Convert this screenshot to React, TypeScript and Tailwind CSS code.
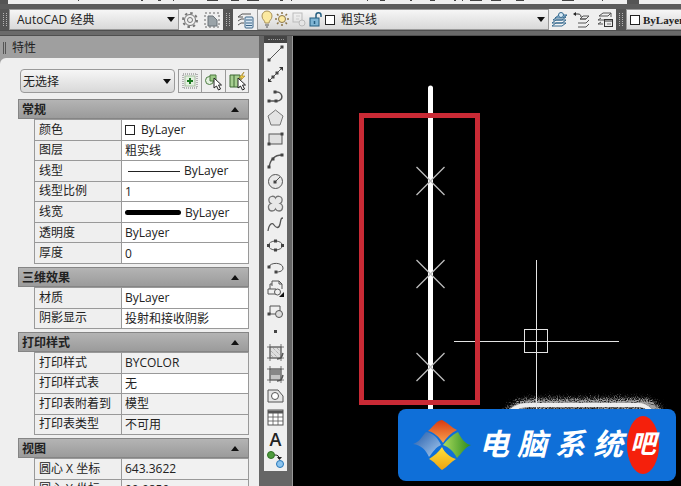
import { Fragment, ReactNode } from "react";
import clsx from "clsx";

const FONT =
  "font-['Open_Sans','Noto_Sans_CJK_SC',sans-serif] text-xs leading-4 text-[#222]";

interface PropertyRow {
  label: string;
  value: string;
  swatch?: "color" | "thin" | "thick";
  locked?: boolean;
}

interface PropertySection {
  title: string;
  height: string;
  rows: PropertyRow[];
}

const SECTIONS: PropertySection[] = [
  {
    title: "常规",
    height: "h-[145px]",
    rows: [
      { label: "颜色", value: "ByLayer", swatch: "color" },
      { label: "图层", value: "粗实线" },
      { label: "线型", value: "ByLayer", swatch: "thin" },
      { label: "线型比例", value: "1" },
      { label: "线宽", value: "ByLayer", swatch: "thick" },
      { label: "透明度", value: "ByLayer" },
      { label: "厚度", value: "0" },
    ],
  },
  {
    title: "三维效果",
    height: "h-[42px]",
    rows: [
      { label: "材质", value: "ByLayer" },
      { label: "阴影显示", value: "投射和接收阴影" },
    ],
  },
  {
    title: "打印样式",
    height: "h-[83px]",
    rows: [
      { label: "打印样式", value: "BYCOLOR", locked: true },
      { label: "打印样式表", value: "无" },
      { label: "打印表附着到", value: "模型", locked: true },
      { label: "打印表类型", value: "不可用", locked: true },
    ],
  },
  {
    title: "视图",
    height: "h-[42px]",
    rows: [
      { label: "圆心 X 坐标", value: "643.3622", locked: true },
      { label: "圆心 Y 坐标", value: "90.9859", locked: true },
    ],
  },
];

const Node = ({ x, y }: { x: number; y: number }) => (
  <rect x={x - 1.5} y={y - 1.5} width="3" height="3" fill="#444" stroke="none" />
);

const DRAW_TOOLS: { name: string; icon: ReactNode }[] = [
  {
    name: "直线",
    icon: (
      <>
        <path d="M3 16 16 3" />
        <Node x={3} y={16} />
        <Node x={16} y={3} />
      </>
    ),
  },
  {
    name: "构造线",
    icon: (
      <>
        <path d="M3 16 16 3" />
        <path d="M2 17v-4l4 4zM17 2v4l-4-4z" fill="#333" stroke="none" />
        <Node x={7} y={12} />
        <Node x={11} y={8} />
      </>
    ),
  },
  {
    name: "多段线",
    icon: (
      <>
        <path d="M3 14h8c7 0 6-9 0-9H9" strokeWidth="1.5" />
        <Node x={3} y={14} />
        <Node x={10} y={14} />
        <Node x={9} y={5} />
      </>
    ),
  },
  {
    name: "多边形",
    icon: <path d="m9.500 2 7.500 6-3 9H5L2 8z" fill="#e3e3e3" stroke="#777" />,
  },
  {
    name: "矩形",
    icon: (
      <>
        <rect x="3" y="5" width="13" height="10" fill="#e0e0e0" />
        <Node x={3} y={15} />
        <Node x={16} y={5} />
      </>
    ),
  },
  {
    name: "圆弧",
    icon: (
      <>
        <path d="M3 17C4 9 8 4 16 4" strokeWidth="1.300" />
        <Node x={3} y={16} />
        <Node x={7} y={8} />
        <Node x={16} y={4} />
      </>
    ),
  },
  {
    name: "圆",
    icon: (
      <>
        <circle cx="9.500" cy="9.500" r="7" fill="#e8e8e8" />
        <path d="m9 10 5-5" />
        <Node x={9} y={10} />
      </>
    ),
  },
  {
    name: "修订云线",
    icon: (
      <path
        d="M9.500 4C8 1 2 2 3 7c0 1 1 2 2 2.500C1 11 2 17 6 17c2 0 3-1 3.500-2 .5 1 2 2 3.500 2 4 0 5-6 1-7.500 1-.5 2-1.500 2-2.500 1-5-5-6-6.500-3z"
        fill="#e8e8e8"
        stroke="#777"
        strokeWidth="1.300"
      />
    ),
  },
  {
    name: "样条曲线",
    icon: <path d="M2 16C3 9 6 7 8 10s5 4 6-1 1-6 3-6" strokeWidth="1.300" />,
  },
  {
    name: "椭圆",
    icon: (
      <>
        <ellipse cx="9.500" cy="9.500" rx="7" ry="4.500" />
        <Node x={2.5} y={9.5} />
        <Node x={16.5} y={9.5} />
        <Node x={9.5} y={5} />
        <Node x={9.5} y={14} />
      </>
    ),
  },
  {
    name: "椭圆弧",
    icon: (
      <>
        <path d="M3 9c1-5 14-5 14 1 0 3-3 4-7 4" />
        <Node x={3} y={9} />
        <Node x={10} y={14} />
      </>
    ),
  },
  {
    name: "插入块",
    icon: (
      <>
        <path d="M6 7V2h7l3 3v5M6 5H4v5M2 10h8v5H2zM13 2v3h3" />
        <circle cx="11.500" cy="13" r="3" fill="#eee" />
        <path d="M18 13v5h-5z" fill="#111" stroke="none" />
      </>
    ),
  },
  {
    name: "创建块",
    icon: (
      <>
        <path d="M4 5h10v5M4 5v8h5" />
        <circle cx="13" cy="13" r="3.500" fill="#ddd" />
        <Node x={3} y={13} />
      </>
    ),
  },
  {
    name: "点",
    icon: <Node x={9.5} y={9.5} />,
  },
  {
    name: "图案填充",
    icon: (
      <>
        <rect x="4" y="4" width="11" height="11" fill="#ddd" stroke="#777" />
        <path d="M4 1v17M15 1v17M1 4h17M1 15h17" strokeWidth=".8" />
        <path
          d="m5 8 6 6M7 5l7 7M5 12l2 2M11 5l3 3"
          stroke="#999"
          strokeDasharray="1 1"
        />
        <path d="M11 16c4 0 5-2 6-6" strokeWidth="1.500" />
      </>
    ),
  },
  {
    name: "渐变色",
    icon: (
      <>
        <rect x="4" y="4" width="11" height="11" fill="#c5c5c5" stroke="#777" />
        <rect x="5" y="5" width="9" height="5" fill="#888" stroke="none" />
        <path d="M4 1v17M15 1v17M1 4h17M1 15h17" strokeWidth=".8" />
        <path d="M11 16c4 0 5-2 6-6" strokeWidth="1.500" />
      </>
    ),
  },
  {
    name: "面域",
    icon: (
      <>
        <path d="M2 4h10l5 6v6H2z" fill="#e5e5e5" />
        <circle cx="9" cy="10" r="3.500" fill="#fff" />
      </>
    ),
  },
  {
    name: "表格",
    icon: (
      <>
        <rect x="2" y="2" width="15" height="15" fill="#fff" />
        <path d="M2 4h15" strokeWidth="3" />
        <path d="M2 9h15M2 13h15M7 5v12M12 5v12" strokeWidth=".8" />
      </>
    ),
  },
  { name: "多行文字", icon: null },
  {
    name: "添加选定对象",
    icon: (
      <>
        <circle cx="5" cy="5" r="3.500" fill="#4d9b3d" stroke="#2d6e22" />
        <circle cx="14" cy="14" r="3.500" fill="#8cc4ee" stroke="#2877b8" />
        <path d="M9 5c3 0 4 1 4 4" stroke="#222" />
        <path d="M11 7h5l-2.500 3z" fill="#222" stroke="none" />
      </>
    ),
  },
];

// dark stubs of the toolbar above, as [left, width]
const STUBS = [
  [78, 1],
  [141, 2],
  [158, 3],
  [173, 1],
  [207, 11],
  [231, 8],
  [247, 12],
  [280, 3],
  [291, 1],
  [367, 1],
  [380, 5],
  [410, 2],
  [430, 5],
  [454, 2],
  [462, 1],
  [470, 12],
  [491, 10],
  [516, 8],
  [562, 12],
  [602, 1],
];

const Grip = ({ wide }: { wide?: boolean }) => (
  <div
    className={clsx(
      "flex shrink-0 items-stretch justify-center gap-[2px] bg-[#555] py-1",
      wide ? "w-[10px]" : "w-[9px]",
    )}
  >
    <i className="w-px border-l border-dotted border-[#b5b5b5]" />
    <i className="w-px border-l border-dotted border-[#b5b5b5]" />
  </div>
);

const Arrow = ({ up }: { up?: boolean }) => (
  <svg
    viewBox="0 0 8 5"
    className={clsx("h-[5px] w-2 shrink-0", up ? "" : "pointer-events-none")}
  >
    <path d={up ? "M4 0 8 5H0z" : "M0 0h8L4 5z"} fill="#111" />
  </svg>
);

const IconButton = ({
  label,
  className,
  children,
}: {
  label: string;
  className?: string;
  children: ReactNode;
}) => (
  <button
    type="button"
    aria-label={label}
    className={clsx("flex items-center justify-center", className)}
  >
    <svg
      viewBox="0 0 20 20"
      className="size-5 shrink-0"
      fill="none"
      stroke="#555"
      strokeWidth="1"
    >
      {children}
    </svg>
  </button>
);

const Combo = ({
  label,
  value,
  className,
  children,
}: {
  label: string;
  value: string;
  className?: string;
  children?: ReactNode;
}) => (
  <div
    className={clsx(
      "flex min-w-0 items-center border border-[#9a9a9a] bg-linear-to-b from-[#f6f6f6] to-[#d9d9d9] pr-[3px]",
      className,
    )}
  >
    {children}
    <select
      aria-label={label}
      className="min-w-0 flex-1 appearance-none bg-transparent outline-none"
    >
      <option>{value}</option>
    </select>
    <Arrow />
  </div>
);

const UpperToolbar = () => (
  <div className="flex h-1 shrink-0 bg-[#555]">
    <svg className="ml-2 h-1 w-[619px] bg-[#efefef]" viewBox="8 0 619 4">
      {STUBS.map(([x, width]) => (
        <rect key={x} x={x} y="0" width={width} height="1" fill="#444" />
      ))}
    </svg>
    <div className="ml-3 flex-1 bg-[#efefef]" />
  </div>
);

const LayerStack = ({ color }: { color: string }) => (
  <g stroke={color}>
    <path d="m2 16 4-3h10l-4 3zM2 13l4-3h10l-4 3zM3 10l4-3h9l-4 3z" fill="#f4f4f4" />
  </g>
);

const WorkspaceToolbar = () => (
  <div className="flex h-[21px] shrink-0 bg-[#efefef]">
    <Grip />
    <Combo label="工作空间" value="AutoCAD 经典" className="w-[170px] shrink-0 pl-[7px]" />
    <IconButton label="工作空间设置" className="w-[22px]">
      <circle cx="10" cy="10" r="5.500" stroke="#777" />
      <circle
        cx="10"
        cy="10"
        r="7"
        stroke="#777"
        strokeWidth="2"
        strokeDasharray="2.500 3"
      />
      <circle cx="10" cy="10" r="2.500" stroke="#777" />
    </IconButton>
    <IconButton label="我的工作空间" className="w-[22px]">
      <rect x="3" y="3" width="14" height="14" stroke="#666" strokeDasharray="2 2" />
      <path d="M6 6h5l4 4v6H6z" fill="#9aa3a8" stroke="#6b7378" />
    </IconButton>
    <Grip wide />
    <IconButton label="图层特性管理器" className="w-6">
      <path d="m3 7 4-3h9M3 11l3-2h3M3 15l3-2h3M3 7h5" stroke="#555" />
      <rect x="10" y="7" width="8" height="11" rx="1" fill="#d7e6f2" stroke="#3b6486" />
      <path d="M11 10h6M11 13h6M11 15.500h6" stroke="#3b6486" />
    </IconButton>
    <Combo label="图层" value="粗实线" className="w-[292px] shrink-0 pl-px">
      <svg viewBox="0 0 80 20" className="mr-[2px] h-5 w-20 shrink-0" fill="none">
        <path
          d="M6 13c0-3-3-3-3-7a5 5 0 0 1 10 0c0 4-3 4-3 7z"
          fill="#fbe9a0"
          stroke="#a9925a"
        />
        <path d="M6 15h4M7 17h2" stroke="#555" />
        <circle cx="23" cy="9" r="3.500" fill="#fbe9a0" stroke="#8c7548" />
        <path
          d="M23 2v2M23 14v2M16 9h2M28 9h2M18 4l1.500 1.500M28 4l-1.500 1.500M18 14l1.500-1.500M28 14l-1.500-1.500"
          stroke="#8c7548"
          strokeWidth="1.500"
        />
        <rect x="34" y="3" width="9" height="9" stroke="#bbb" />
        <path d="M37 6h4M37 9h3" stroke="#ccc" />
        <circle cx="43" cy="13" r="3" fill="#e5e5e5" stroke="#bbb" />
        <rect x="51" y="8" width="9" height="8" fill="#7fb5d4" stroke="#245e80" />
        <path d="M57 8V5c0-3 5-3 5 0v2M55.500 11v3" stroke="#245e80" strokeWidth="1.500" />
        <rect x="66.500" y="5.500" width="9" height="9" fill="#fff" stroke="#222" />
      </svg>
    </Combo>
    <IconButton label="将对象的图层置为当前" className="w-[22px]">
      <LayerStack color="#34688e" />
      <path d="m5 8 4-3h8l-4 3z" fill="#a9cde5" stroke="#34688e" />
      <circle cx="11" cy="5" r="2.500" fill="#d8ecf8" stroke="#34688e" />
    </IconButton>
    <IconButton label="上一个图层" className="w-[22px]">
      <path d="m8 9 3-3h6l-3 3zM6 13h8l3-3M6 17h8l3-3M8 9h6" />
      <path d="M3 4h3c2 0 3 1 3 3" stroke="#333" />
      <path d="M1 4l3-2v4z" fill="#222" stroke="none" />
    </IconButton>
    <IconButton label="图层状态管理器" className="w-[23px]">
      <path d="m4 6 4-3h8l-3 3zM3 10l3-2M3 10h6M3 14l3-2M3 14h5M16 3v4" />
      <rect x="9.500" y="9.500" width="8" height="7" fill="#eee" stroke="#333" />
      <path d="M10 11h7" stroke="#333" />
      <path d="M12 14h4" stroke="#777" />
    </IconButton>
    <Grip wide />
    <div className="flex min-w-0 flex-1 items-center overflow-hidden border border-r-0 border-[#9a9a9a] bg-linear-to-b from-[#f6f6f6] to-[#d9d9d9] pl-[3px]">
      <i className="mr-[3px] size-[10px] shrink-0 border border-[#222] bg-white" />
      <select
        aria-label="颜色控制"
        className="shrink-0 appearance-none bg-transparent font-['Liberation_Serif',serif] text-[11px] font-bold outline-none"
      >
        <option>ByLayer</option>
      </select>
    </div>
  </div>
);

const PropertyValue = ({ value, swatch }: PropertyRow) => (
  <div className="flex items-center pt-px">
    {swatch === "color" && (
      <i className="mr-[6px] size-[10px] border border-[#222] bg-white" />
    )}
    {swatch === "thin" && <i className="mr-1 ml-[3px] h-px w-[52px] bg-[#222]" />}
    {swatch === "thick" && (
      <i className="mr-1 h-[5px] w-14 rounded-sm bg-black" />
    )}
    {value}
  </div>
);

const Section = ({ title, height, rows }: PropertySection) => (
  <section className="mb-[3px]">
    <button
      type="button"
      className="flex h-5 w-full items-center justify-between border border-[#858585] bg-linear-to-b from-[#b4b4b4] to-[#9b9b9b] pt-px pr-[9px] pl-[3px] font-bold"
    >
      {title}
      <Arrow up />
    </button>
    <table
      className={clsx(
        "ml-4 w-[calc(100%-16px)] table-fixed border-collapse",
        height,
      )}
    >
      <tbody>
        {rows.map((row) => (
          <tr key={row.label}>
            <th
              scope="row"
              className="w-[87px] border border-[#999] bg-[#efefef] p-0 pl-1 text-left font-normal whitespace-nowrap"
            >
              {row.label}
            </th>
            <td
              className={clsx(
                "border border-[#999] p-0 pl-[3px] whitespace-nowrap",
                row.locked ? "bg-[#f1f1f1]" : "bg-white",
              )}
            >
              <PropertyValue {...row} />
            </td>
          </tr>
        ))}
      </tbody>
    </table>
  </section>
);

const Cursor = () => (
  <path d="M11 7v10l2.500-2 2 4 2-1-2-4h3z" fill="#fff" stroke="#222" />
);

const PropertiesPanel = () => (
  <aside className="flex w-[259px] shrink-0 flex-col overflow-hidden bg-[#9f9f9f]">
    <header className="flex h-[22px] shrink-0 items-center gap-[6px] pt-[2px] pl-[3px]">
      <i className="h-3 w-[3px] border-x border-[#555]" />
      <h1>特性</h1>
    </header>
    <div className="flex min-h-0 flex-1 flex-col overflow-hidden rounded-tl-md bg-[#efefef] pt-[11px] pr-[10px] pl-[18px]">
      <div className="mb-[6px] flex h-6 shrink-0 gap-[3px] pl-[2px]">
        <Combo label="选择对象" value="无选择" className="w-[155px] rounded-sm pt-px pl-[2px]" />
        <div className="flex flex-1 divide-x divide-[#999] border border-[#999]">
          <IconButton label="切换 PICKADD" className="flex-1">
            <rect x="3" y="3" width="14" height="14" stroke="#777" strokeDasharray="1 1" />
            <rect x="5" y="5" width="10" height="10" fill="#e3f0df" stroke="#a5bb9f" />
            <path d="M10 7v6M7 10h6" stroke="#1d7a22" strokeWidth="2" />
          </IconButton>
          <IconButton label="选择对象" className="flex-1">
            <circle cx="6.500" cy="9.500" r="4" fill="#e3f0df" stroke="#4c7b41" />
            <path d="M7 4h6v6H7z" fill="#9ccb87" stroke="#4c7b41" />
            <Cursor />
          </IconButton>
          <IconButton label="快速选择" className="flex-1">
            <path d="M3 4h10v12H3zM7 4v12" fill="#a7cf91" stroke="#3f6b34" />
            <path d="m17 1-5 6h3l-3 4 6-6h-3z" fill="#f1cf47" stroke="#9c7b20" strokeWidth=".6" />
            <Cursor />
          </IconButton>
        </div>
      </div>
      {SECTIONS.map((section) => (
        <Section key={section.title} {...section} />
      ))}
    </div>
  </aside>
);

const DrawToolbar = () => (
  <nav
    aria-label="绘图"
    className="flex w-[34px] shrink-0 flex-col border-r border-[#999] bg-[#666] px-[5px]"
  >
    <div className="flex h-[7px] shrink-0 items-center justify-center bg-[#444]">
      <i className="w-4 border-t border-dotted border-[#999]" />
    </div>
    <div className="flex h-[428px] shrink-0 flex-col bg-[#efefef]">
      {DRAW_TOOLS.map(({ name, icon }) => (
        <Fragment key={name}>
          {icon ? (
            <IconButton label={name} className="min-h-0 flex-1">
              {icon}
            </IconButton>
          ) : (
            <button
              type="button"
              aria-label={name}
              className="flex min-h-0 flex-1 items-center justify-center font-['Open_Sans',sans-serif] text-lg leading-5 font-semibold"
            >
              A
            </button>
          )}
        </Fragment>
      ))}
    </div>
  </nav>
);

const Drawing = () => (
  <svg
    viewBox="0 0 388 450"
    className="h-[450px] w-[388px]"
    fill="none"
    role="img"
    aria-label="模型空间"
  >
    <defs>
      <filter id="grain" x="-10%" y="-100%" width="120%" height="300%">
        <feGaussianBlur in="SourceGraphic" stdDeviation="2" result="soft" />
        <feTurbulence type="fractalNoise" baseFrequency="0.9" numOctaves="2" result="noise" />
        <feDisplacementMap in="soft" in2="noise" scale="14" xChannelSelector="R" yChannelSelector="G" />
      </filter>
    </defs>
    <path
      d="M213 382c6-9 12-14 24-15h112c8 0 14 5 18 12"
      stroke="#aaa"
      strokeWidth="9"
      filter="url(#grain)"
    />
    <path d="M217 375c6-6 12-7 20-7h108c6 0 9 2 12 5" stroke="#eee" strokeWidth="4" />
    <path d="M137.500 51v322" stroke="#fff" strokeWidth="5" strokeLinecap="round" />
    {[144, 237, 330].map((y) => (
      <path
        key={y}
        d={`M123.500 ${y - 14}l28 28m0-28-28 28`}
        stroke="#bdbdbd"
        strokeWidth="1.300"
      />
    ))}
    <g stroke="#e4e4e4" shapeRendering="crispEdges">
      <path d="M161 304.500h165M243.500 223v150" />
      <rect x="231.500" y="292.500" width="23" height="23" />
    </g>
    <rect x="68.500" y="78.500" width="116" height="287" stroke="#c92a35" strokeWidth="5" />
  </svg>
);

const Flag = () => (
  <svg viewBox="0 0 58 52" className="h-[52px] w-[58px] shrink-0">
    <defs>
      <linearGradient id="red" x1="0" y1="0" x2="0" y2="1">
        <stop stopColor="#d93a12" />
        <stop offset="1" stopColor="#f9a24d" />
      </linearGradient>
      <linearGradient id="blue" x1="0" y1="0" x2="1" y2="1">
        <stop stopColor="#2159a8" />
        <stop offset="1" stopColor="#a9cdf1" />
      </linearGradient>
      <linearGradient id="green" x1="0" y1="0" x2="1" y2="0">
        <stop stopColor="#a9db5c" />
        <stop offset="1" stopColor="#2c8a1e" />
      </linearGradient>
      <linearGradient id="yellow" x1="0" y1="0" x2="0" y2="1">
        <stop stopColor="#ffe23a" />
        <stop offset="1" stopColor="#eea312" />
      </linearGradient>
    </defs>
    <path d="M15 12C20 8 23 2 29 1c5 2 10 8 15 10-6 3-11 8-14 13-4-6-9-11-15-12z" fill="url(#red)" />
    <path d="M13 13c7 1 12 6 15 13-5 2-8 7-12 12-3-7-8-12-16-13 7-2 9-8 13-12z" fill="url(#blue)" />
    <path d="M45 13c3 6 7 12 13 13-6 2-9 8-14 13-3-6-8-11-14-13 4-5 9-10 15-13z" fill="url(#green)" />
    <path d="M29 28c3 6 8 10 14 12-5 3-9 8-14 11-4-3-8-9-13-11 5-3 10-7 13-12z" fill="url(#yellow)" />
  </svg>
);

const Watermark = () => (
  <div className="absolute right-[5px] bottom-[5px] flex h-[72px] w-[278px] items-center rounded-lg bg-[#0f6fd8] pl-[15px] font-['Liberation_Serif','Noto_Sans_CJK_SC',serif] text-[30px] leading-10 font-bold text-white italic">
    <Flag />
    <div className="ml-2 flex gap-2">
      {["电", "脑", "系", "统"].map((char) => (
        <span key={char}>{char}</span>
      ))}
    </div>
    <span className="ml-1 flex h-[58px] w-8 shrink-0 items-center justify-center rounded-[50%] bg-[#f5200c] text-[26px]">
      吧
    </span>
  </div>
);

const App = () => {
  return (
    <div className={clsx("relative flex h-screen flex-col overflow-hidden bg-[#666]", FONT)}>
      <UpperToolbar />
      <div className="h-[5px] shrink-0 bg-[#5c5c5c]" />
      <WorkspaceToolbar />
      <div className="h-[6px] shrink-0 border-y border-[#4f4f4f] bg-[#6a6a6a]" />
      <div className="flex min-h-0 flex-1">
        <PropertiesPanel />
        <DrawToolbar />
        <main className="min-w-0 flex-1 overflow-hidden bg-black pt-px">
          <Drawing />
        </main>
      </div>
      <Watermark />
    </div>
  );
};

export default App;
